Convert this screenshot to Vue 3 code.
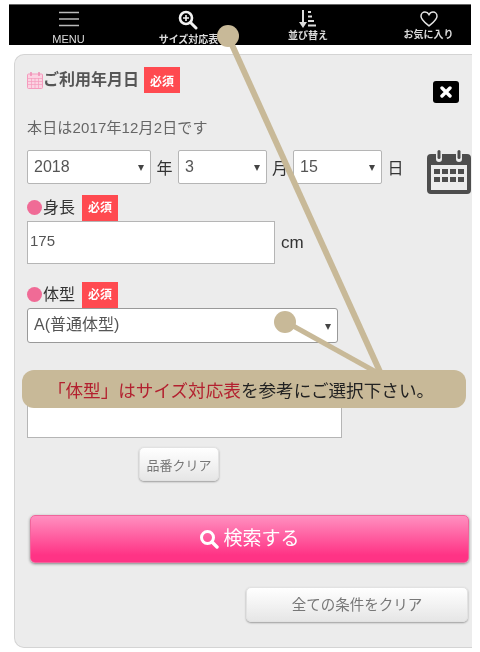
<template>
  <div class="page">
    <nav class="topbar">
      <a v-for="item in navItems" :key="item.label" class="nav-item" :class="item.cls">
        <svg v-if="item.icon === 'menu'" width="22" height="16" viewBox="0 0 22 16" fill="none" stroke="#bbb" stroke-width="1.5">
          <path d="M1 1.5h20M1 8h20M1 14.5h20" />
        </svg>
        <svg v-else-if="item.icon === 'zoom'" width="20" height="20" viewBox="0 0 20 20" fill="none" stroke="#f2f2f2">
          <circle cx="8" cy="8" r="6" stroke-width="2.6" />
          <path d="M12.5 12.5l5.5 5.500" stroke-width="3" stroke-linecap="round" />
          <path d="M8 5v6M5 8h6" stroke-width="1.6" />
        </svg>
        <svg v-else-if="item.icon === 'sort'" width="18" height="18" viewBox="0 0 18 18" fill="#ddd">
          <path d="M3 0h2v12h3l-4 6-4-6h3z" />
          <rect x="9" y="1" width="3" height="2" />
          <rect x="9" y="5.500" width="4" height="2" />
          <rect x="9" y="10" width="6" height="2" />
          <rect x="9" y="14.500" width="8" height="2" />
        </svg>
        <svg v-else width="18" height="16" viewBox="0 0 18 16" fill="none" stroke="#e4e4e4" stroke-width="1.5">
          <path d="M9 14.800C5 11.500 1 8.800 1 5.200 1 2.800 2.800 1 5 1c1.700 0 3.100 0.900 4 2.600C9.900 1.900 11.300 1 13 1c2.200 0 4 1.800 4 4.200 0 3.600-4 6.300-8 9.600z" />
        </svg>
        <span class="nav-label">{{ item.label }}</span>
      </a>
    </nav>

    <form class="card" @submit.prevent>
      <div class="heading">
        <svg class="cal-small" width="16" height="17" viewBox="0 0 16 17">
          <rect x="0.500" y="2" width="15" height="14.500" rx="1" fill="#fbd3e2" stroke="#f59bbd" />
          <path d="M4 0v4M12 0v4" stroke="#f08cb4" stroke-width="1.500" />
          <path d="M1 6.500h14M1 9.500h14M1 12.500h14M4.500 6v10M8 6v10M11.500 6v10" stroke="#f59bbd" stroke-width="0.700" />
        </svg>
        <span class="heading-text">ご利用年月日</span>
        <span class="badge">必須</span>
      </div>
      <button type="button" class="close">
        <svg width="12" height="12" viewBox="0 0 12 12" stroke="#fff" stroke-width="3.400" stroke-linecap="round">
          <path d="M2 2l8 8M10 2l-8 8" />
        </svg>
      </button>

      <p class="today">本日は2017年12月2日です</p>

      <div class="date-row">
        <div class="select year">2018</div>
        <span class="unit">年</span>
        <div class="select month">3</div>
        <span class="unit narrow">月</span>
        <div class="select day">15</div>
        <span class="unit">日</span>
        <svg class="cal-big" width="44" height="44" viewBox="0 0 44 44" fill="#4d4d4d">
          <path d="M4 4h5v5a3 3 0 0 0 6 0V4h14v5a3 3 0 0 0 6 0V4h5a4 4 0 0 1 4 4v32a4 4 0 0 1-4 4H4a4 4 0 0 1-4-4V8a4 4 0 0 1 4-4z" />
          <rect x="10.500" y="0" width="3" height="9" rx="1.500" />
          <rect x="30.500" y="0" width="3" height="9" rx="1.500" />
          <rect x="4" y="15" width="36" height="25" fill="#ececec" />
          <path d="M7 19h6v5H7zM15 19h6v5h-6zM23 19h6v5h-6zM31 19h6v5h-6zM7 27h6v5H7zM15 27h6v5h-6zM23 27h6v5h-6zM31 27h6v5h-6z" />
        </svg>
      </div>

      <div class="field-label">
        <i class="dot"></i><span>身長</span><span class="badge">必須</span>
      </div>
      <div class="height-row">
        <div class="input height">175</div>
        <span class="unit">cm</span>
      </div>

      <div class="field-label shape">
        <i class="dot"></i><span>体型</span><span class="badge">必須</span>
      </div>
      <div class="select shape-select"><span>A(普通体型)</span></div>

      <div class="input code"></div>
      <button type="button" class="btn small">品番クリア</button>

      <button type="submit" class="search">
        <svg width="20" height="20" viewBox="0 0 20 20" fill="none" stroke="#fff">
          <circle cx="8.500" cy="8.500" r="6" stroke-width="3" />
          <path d="M13 13l5 5" stroke-width="3.400" stroke-linecap="round" />
        </svg>
        <span class="search-label">検索する</span>
      </button>

      <div class="clear-row">
        <button type="button" class="btn wide">全ての条件をクリア</button>
      </div>
    </form>

    <svg class="pointer" width="480" height="652" viewBox="0 0 480 652">
      <g stroke="#c8b998" stroke-width="6" fill="none">
        <path d="M228 36L381 374" />
        <path d="M286 322L376 372" stroke-width="5" />
      </g>
      <circle cx="228" cy="36" r="11" fill="#c8b998" />
      <circle cx="285" cy="322" r="11" fill="#c8b998" />
    </svg>
    <div class="bubble"><em>「体型」はサイズ対応表</em>を参考にご選択下さい。</div>
  </div>
</template>

<script setup>
const navItems = [
  { label: 'MENU', icon: 'menu', cls: 'menu' },
  { label: 'サイズ対応表', icon: 'zoom', cls: 'size' },
  { label: '並び替え', icon: 'sort', cls: 'sort' },
  { label: 'お気に入り', icon: 'heart', cls: 'fav' }
]
</script>

<style>
html, body {
  margin: 0;
  background: #fff;
}
</style>

<style scoped>
.page {
  position: relative;
  width: 480px;
  height: 652px;
  overflow: hidden;
  padding-top: 4px;
  box-sizing: border-box;
  font-family: "Liberation Sans", "Noto Sans CJK JP", sans-serif;
  color: #333;
  filter: blur(0.35px);
}

.topbar {
  display: grid;
  grid-template-columns: repeat(4, 120px);
  box-sizing: border-box;
  margin-left: 9px;
  width: 462px;
  height: 41px;
  background: #000;
  border-top: 1px solid #666;
  overflow: hidden;
}

.nav-item {
  display: flex;
  flex-direction: column;
  align-items: center;
  margin-left: -1px;
  color: #ddd;
  height: 40px;
}

.nav-label {
  font-size: 10px;
  font-weight: 700;
  line-height: 12px;
  white-space: nowrap;
}

.menu { padding-top: 6px; }
.menu .nav-label { font-size: 11px; margin-top: 6px; font-weight: 400; }
.size { padding-top: 5px; }
.size svg { margin-left: -2px; }
.size .nav-label { margin-top: 4px; }
.sort { padding-top: 5px; margin-left: -2px; }
.sort .nav-label { margin-top: 2px; }
.fav { padding-top: 6px; }
.fav .nav-label { margin-top: 2px; }

.card {
  position: relative;
  box-sizing: border-box;
  width: 458px;
  height: 594px;
  margin: 9px 0 0 14px;
  padding: 12px 0 0 12px;
  background: #ececec;
  border: 1px solid #d4d4d4;
  border-right: 0;
  border-radius: 10px 0 0 10px;
}

.heading {
  display: flex;
  align-items: center;
  height: 26px;
}

.heading-text {
  font-size: 16px;
  line-height: 20px;
  font-weight: 700;
  color: #555;
  margin-right: 5px;
}

.badge {
  display: inline-flex;
  align-items: center;
  justify-content: center;
  width: 36px;
  height: 26px;
  background: #ff4a50;
  color: #fff;
  font-size: 12px;
  font-weight: 700;
}

.close {
  position: absolute;
  left: 418px;
  top: 26px;
  width: 26px;
  height: 22px;
  padding: 0;
  display: flex;
  align-items: center;
  justify-content: center;
  background: #000;
  border: 0;
  border-radius: 3px;
}

.today {
  margin: 26px 0 0;
  font-size: 15px;
  line-height: 18px;
  letter-spacing: 0.15px;
  color: #666;
}

.date-row {
  display: flex;
  align-items: center;
  margin-top: 13px;
  height: 34px;
  position: relative;
}

.select {
  position: relative;
  box-sizing: border-box;
  height: 34px;
  padding: 0 6px;
  display: flex;
  align-items: center;
  background: #fff;
  border: 1px solid #b5b5b5;
  border-radius: 2px;
  font-size: 16px;
  line-height: 20px;
  color: #555;
}

.select::after {
  content: "";
  position: absolute;
  right: 6px;
  top: 14px;
  border-top: 6px solid #444;
  border-left: 3px solid transparent;
  border-right: 3px solid transparent;
}

.year { width: 124px; }
.month { width: 89px; }
.day { width: 89px; }

.unit {
  font-size: 16px;
  color: #333;
  width: 27px;
  text-align: center;
}

.unit.narrow { width: 26px; }

.cal-big {
  position: absolute;
  left: 400px;
  top: 0;
}

.field-label {
  display: flex;
  align-items: center;
  height: 26px;
  margin-top: 11px;
  font-size: 16px;
  line-height: 20px;
  color: #333;
}

.field-label .badge { margin-left: 7px; }

.dot {
  width: 15px;
  height: 15px;
  margin-top: -2px;
  margin-right: 1px;
  border-radius: 50%;
  background: #f06b96;
}

.height-row {
  display: flex;
  align-items: center;
}

.input {
  box-sizing: border-box;
  background: #fff;
  border: 1px solid #b5b5b5;
  font-size: 15px;
  color: #555;
}

.height {
  width: 248px;
  height: 43px;
  padding: 10px 2px 0;
}

.height-row .unit {
  width: auto;
  margin-left: 6px;
  font-size: 17px;
  line-height: 20px;
}

.shape { margin-top: 18px; }

.shape-select {
  width: 311px;
  height: 35px;
  border-radius: 3px;
  border-color: #999;
}

.shape-select span { margin-top: -2px; }
.shape-select::after { top: 15px; }

.code {
  width: 315px;
  height: 60px;
  margin-top: 35px;
}

.btn {
  display: block;
  padding: 0;
  font-family: inherit;
  font-weight: 400;
  border: 1px solid #e2e2e2;
  border-radius: 5px;
  background: linear-gradient(#fff, #e6e6e6);
  box-shadow: 0 1px 2px rgba(0, 0, 0, 0.35);
  color: #777;
}

.small {
  width: 80px;
  height: 34px;
  margin: 9px 0 0 112px;
  font-size: 13px;
}

.search {
  display: flex;
  align-items: center;
  justify-content: center;
  gap: 4px;
  box-sizing: border-box;
  width: 439px;
  height: 48px;
  margin: 34px 0 0 3px;
  padding: 0 0 1px;
  font-family: inherit;
  font-size: 19px;
  line-height: 24px;
  color: #fff;
  border: 1px solid #f0659c;
  border-radius: 5px;
  background: linear-gradient(#ff90c0, #ff3385 85%);
  box-shadow: 0 1px 3px rgba(0, 0, 0, 0.45);
}

.clear-row {
  display: flex;
  justify-content: flex-end;
  margin: 24px 3px 0 0;
  width: 441px;
}

.wide {
  width: 222px;
  height: 35px;
  padding-bottom: 2px;
  font-size: 14.5px;
}

.pointer {
  position: absolute;
  left: 0;
  top: 0;
  pointer-events: none;
}

.bubble {
  position: absolute;
  left: 22px;
  top: 370px;
  box-sizing: border-box;
  width: 444px;
  height: 38px;
  padding-right: 6px;
  border-radius: 12px;
  background: #c8b998;
  display: flex;
  align-items: center;
  justify-content: center;
  font-size: 17.6px;
  color: #222;
}

.bubble em {
  font-style: normal;
  color: #b3202f;
}
</style>
